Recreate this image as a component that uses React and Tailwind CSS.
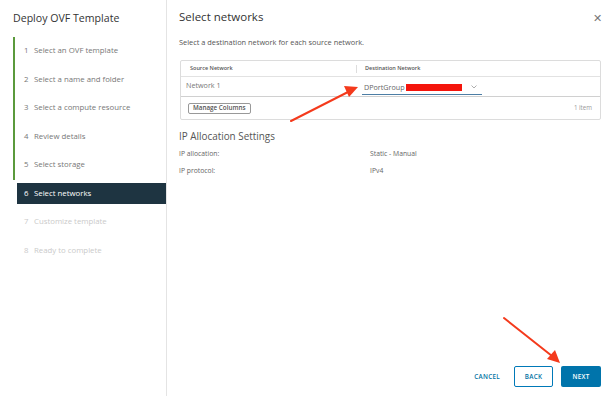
import React from "react";

const steps = [
  { n: 1, label: "Select an OVF template", state: "done" },
  { n: 2, label: "Select a name and folder", state: "done" },
  { n: 3, label: "Select a compute resource", state: "done" },
  { n: 4, label: "Review details", state: "done" },
  { n: 5, label: "Select storage", state: "done" },
  { n: 6, label: "Select networks", state: "active" },
  { n: 7, label: "Customize template", state: "todo" },
  { n: 8, label: "Ready to complete", state: "todo" },
];

function Step({ step }) {
  if (step.state === "active") {
    return (
      <div className="h-[28.5px] flex items-center pl-[4px]">
        <div className="h-[21px] w-full bg-[#1e3441] flex items-center pl-[7px] text-white text-[7.8px] font-medium">
          <span className="w-[10px]">{step.n}</span>
          <span>{step.label}</span>
        </div>
      </div>
    );
  }
  const done = step.state === "done";
  return (
    <div
      className={
        "h-[28.5px] flex items-center pl-[9px] text-[7.8px] " +
        (done ? "border-l-[2px] border-[#5b9a3c] text-[#777]" : "border-l-[2px] border-transparent text-[#cacaca]")
      }
    >
      <span className="w-[10px]">{step.n}</span>
      <span>{step.label}</span>
    </div>
  );
}

export default function App() {
  return (
    <div
      className="relative w-[610px] h-[396px] bg-white flex overflow-hidden"
      style={{ fontFamily: "'Open Sans', 'Noto Sans', sans-serif" }}
    >
      {/* Sidebar */}
      <div className="w-[167px] shrink-0 border-r border-[#e4e4e4] flex flex-col">
        <h1 className="pl-[13px] pt-[9px] text-[10.6px] text-[#333] leading-[18px]">Deploy OVF Template</h1>
        <div className="mt-[10px] ml-[13px]">
          {steps.map((s) => (
            <Step key={s.n} step={s} />
          ))}
        </div>
      </div>

      {/* Main */}
      <div className="flex-1 flex flex-col pl-[12px] pr-[9px]">
        <div className="flex items-center justify-between pt-[8px] h-[26px]">
          <h2 className="text-[11.5px] text-[#333]">Select networks</h2>
          <span className="text-[#777] text-[11px] leading-none mr-[-1px]">✕</span>
        </div>
        <p className="mt-[11px] text-[7.4px] text-[#555]">Select a destination network for each source network.</p>

        {/* Table */}
        <div className="mt-[12px] ml-[1px] border border-[#dcdcdc] rounded-[2px] text-[#666]">
          <div className="h-[16px] flex items-center border-b border-[#e2e2e2] text-[5.5px] font-semibold text-[#555]">
            <div className="w-[175px] pl-[9px]">Source Network</div>
            <div className="h-[8px] border-l border-[#ddd] pl-[8px] flex items-center">Destination Network</div>
          </div>
          <div className="h-[20px] flex items-center border-b border-[#d0d0d0]">
            <div className="w-[181px] pl-[5px] text-[7.2px] text-[#777] self-start pt-[3px]">Network 1</div>
            <div className="w-[120px] h-[14px] flex items-center justify-between border-b-[1.5px] border-[#4d7ea5] mt-[2px] pl-[2px] pr-[5px]">
              <div className="flex items-center text-[7.2px] text-[#666]">
                <span>DPortGroup</span>
                <span className="ml-[1px] w-[56px] h-[7px] bg-[#f4150c]"></span>
              </div>
              <svg width="6" height="4" viewBox="0 0 6 4">
                <path d="M0.5 0.5 L3 3 L5.5 0.5" fill="none" stroke="#999" strokeWidth="0.8" />
              </svg>
            </div>
          </div>
          <div className="h-[22px] flex items-center justify-between pl-[7px] pr-[8px]">
            <button className="h-[11px] px-[4px] border border-[#999] rounded-[2px] text-[6.3px] font-semibold text-[#555] flex items-center">
              Manage Columns
            </button>
            <span className="text-[6.2px] text-[#999]">1 item</span>
          </div>
        </div>

        {/* IP Allocation */}
        <h3 className="mt-[9px] text-[9.9px] text-[#555]">IP Allocation Settings</h3>
        <div className="mt-[2px] text-[6.8px] text-[#666]">
          <div className="flex h-[17px] items-center">
            <span className="w-[191px]">IP allocation:</span>
            <span>Static - Manual</span>
          </div>
          <div className="flex h-[17px] items-center">
            <span className="w-[191px]">IP protocol:</span>
            <span>IPv4</span>
          </div>
        </div>

        {/* Footer buttons */}
        <div className="mt-auto mb-[9px] flex items-center justify-end gap-[8px]">
          <button className="h-[21px] px-[6px] text-[6.3px] font-semibold tracking-[0.3px] text-[#0072a3]">CANCEL</button>
          <button className="h-[21px] w-[39px] border border-[#0079b8] rounded-[2px] text-[6.3px] font-semibold tracking-[0.3px] text-[#0072a3]">
            BACK
          </button>
          <button className="h-[21px] w-[40px] bg-[#0074ab] rounded-[2px] text-[6.3px] font-semibold tracking-[0.3px] text-white">
            NEXT
          </button>
        </div>
      </div>

      {/* Annotation arrows */}
      <svg className="absolute inset-0 pointer-events-none" width="610" height="396" viewBox="0 0 610 396">
        <line x1="291" y1="121" x2="348" y2="92" stroke="#f43a1c" strokeWidth="2" strokeLinecap="round" />
        <polygon points="358,87 344,86 349,97" fill="#f43a1c" />
        <line x1="504" y1="318" x2="552" y2="356" stroke="#f43a1c" strokeWidth="2" strokeLinecap="round" />
        <polygon points="560,363 547,359 555,350" fill="#f43a1c" />
      </svg>
    </div>
  );
}
